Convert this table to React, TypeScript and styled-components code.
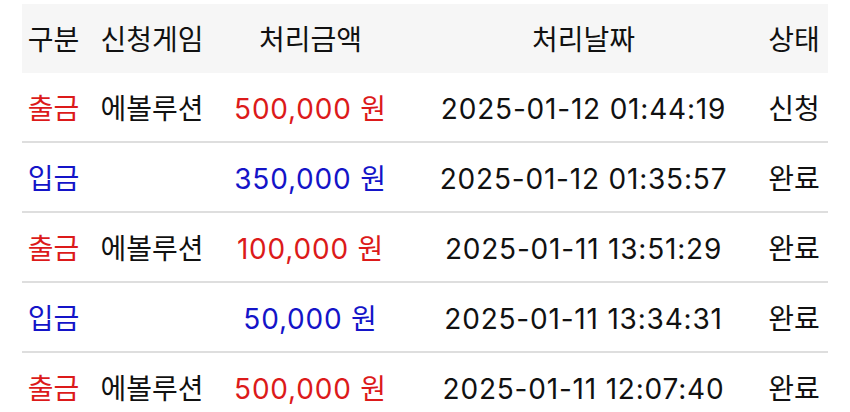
import React from "react";
import styled, { createGlobalStyle } from "styled-components";

const Global = createGlobalStyle`
  html, body { margin: 0; padding: 0; background: #ffffff; }
  body { font-family: "Inter", "Noto Sans CJK KR", sans-serif; overflow: hidden; }
`;

const Page = styled.div`
  width: 850px;
  height: 412px;
  padding: 4px 22px 0 22px;
  box-sizing: border-box;
  overflow: hidden;
`;

const Table = styled.div`
  display: flex;
  flex-direction: column;
  width: 806px;
`;

const Row = styled.div<{ $head?: boolean }>`
  display: grid;
  grid-template-columns: 63px 134px 183px 363px 58px;
  padding-right: 5px;
  height: ${(p) => (p.$head ? "69px" : "68px")};
  background: ${(p) => (p.$head ? "#f6f6f6" : "#ffffff")};
  border-bottom: ${(p) => (p.$head ? "none" : "2px solid #dedede")};
  align-items: center;
`;

type Tone = "red" | "blue" | "dark";
const toneColor: Record<Tone, string> = {
  red: "#dc1a1a",
  blue: "#1414c8",
  dark: "#111111",
};

const Cell = styled.div<{ $tone?: Tone; $num?: boolean }>`
  text-align: center;
  white-space: nowrap;
  font-size: 28px;
  line-height: 32px;
  padding-top: 3px;
  letter-spacing: ${(p) => (p.$num ? "0.8px" : "0")};
  color: ${(p) => toneColor[p.$tone || "dark"]};
`;

type Item = {
  kind: "출금" | "입금";
  game: string;
  amount: string;
  date: string;
  status: string;
};

const items: Item[] = [
  { kind: "출금", game: "에볼루션", amount: "500,000 원", date: "2025-01-12 01:44:19", status: "신청" },
  { kind: "입금", game: "", amount: "350,000 원", date: "2025-01-12 01:35:57", status: "완료" },
  { kind: "출금", game: "에볼루션", amount: "100,000 원", date: "2025-01-11 13:51:29", status: "완료" },
  { kind: "입금", game: "", amount: "50,000 원", date: "2025-01-11 13:34:31", status: "완료" },
  { kind: "출금", game: "에볼루션", amount: "500,000 원", date: "2025-01-11 12:07:40", status: "완료" },
];

export default function App() {
  return (
    <>
      <Global />
      <Page>
        <Table>
          <Row $head>
            <Cell>구분</Cell>
            <Cell>신청게임</Cell>
            <Cell>처리금액</Cell>
            <Cell>처리날짜</Cell>
            <Cell>상태</Cell>
          </Row>
          {items.map((it, i) => {
            const tone: Tone = it.kind === "출금" ? "red" : "blue";
            return (
              <Row key={i}>
                <Cell $tone={tone}>{it.kind}</Cell>
                <Cell>{it.game}</Cell>
                <Cell $tone={tone} $num>{it.amount}</Cell>
                <Cell $num>{it.date}</Cell>
                <Cell>{it.status}</Cell>
              </Row>
            );
          })}
        </Table>
      </Page>
    </>
  );
}
